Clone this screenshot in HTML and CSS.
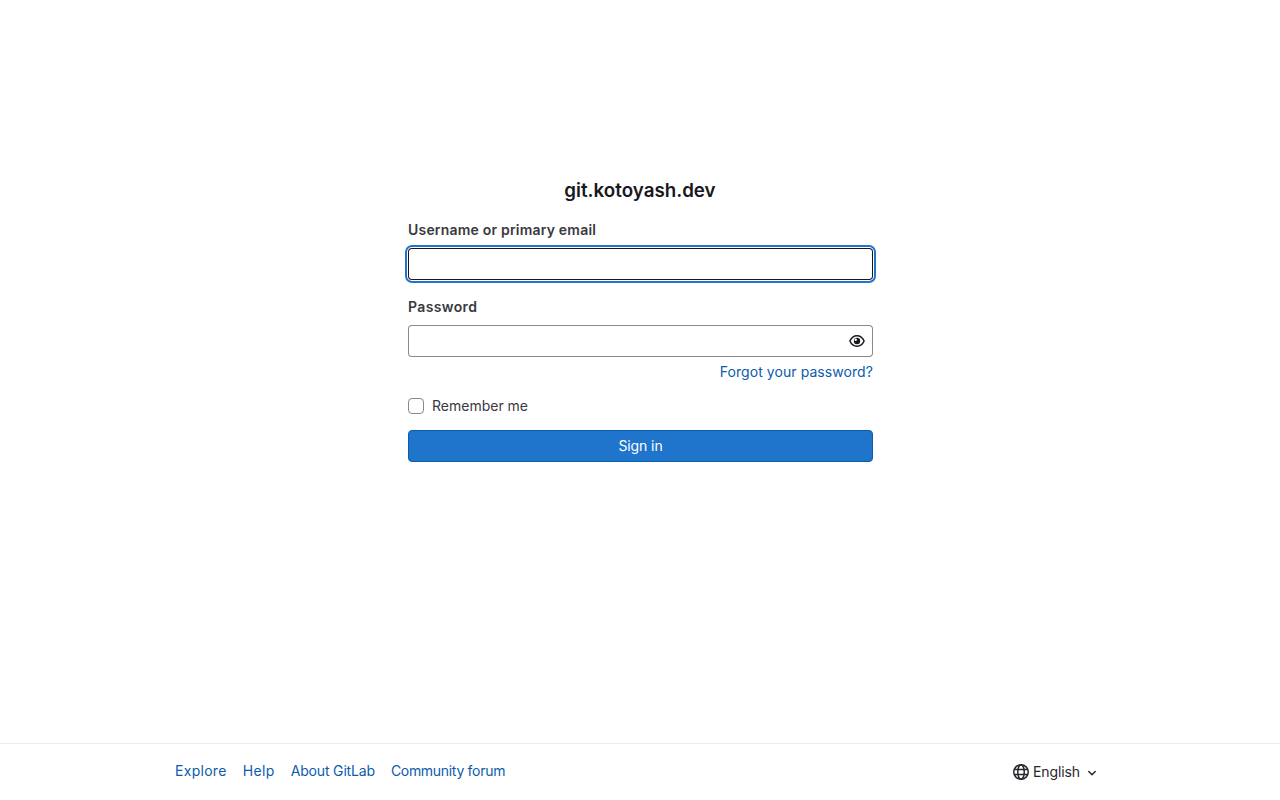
FILE: index.html
```html
<!DOCTYPE html>
<html lang="en">
<head>
<meta charset="utf-8">
<title>Sign in · GitLab</title>
<link rel="stylesheet" href="styles.css">
</head>
<body>
<div class="page">
  <main class="main">
    <h1 class="title">git.kotoyash.dev</h1>
    <form class="form">
      <div class="field">
        <label class="label" for="login">Username or primary email</label>
        <input class="input input-focus" id="login" type="text">
      </div>
      <div class="field field-password">
        <label class="label label-password" for="password">Password</label>
        <div class="password-wrap">
          <input class="input" id="password" type="password">
          <svg class="eye" width="16" height="16" viewBox="0 0 16 16" aria-hidden="true">
            <path d="M.9 8C2.400 4.600 5 2.750 8 2.750s5.600 1.850 7.100 5.250C13.600 11.400 11 13.250 8 13.250S2.400 11.400.9 8z" fill="none" stroke="#18171d" stroke-width="1.500" stroke-linejoin="round"/>
            <circle cx="8" cy="8" r="3.200" fill="#18171d"/>
            <circle cx="6.700" cy="6.800" r="1.200" fill="#fff"/>
          </svg>
        </div>
        <div class="forgot-row"><a class="link link-forgot" href="#">Forgot your password?</a></div>
      </div>
      <label class="remember">
        <span class="checkbox"></span>
        <span>Remember me</span>
      </label>
      <button class="submit" type="button">Sign in</button>
    </form>
  </main>
  <footer class="footer">
    <div class="footer-inner">
      <nav class="footer-links">
        <a class="link link-explore" href="#">Explore</a>
        <a class="link link-help" href="#">Help</a>
        <a class="link link-about" href="#">About GitLab</a>
        <a class="link link-forum" href="#">Community forum</a>
      </nav>
      <div class="lang">
        <svg class="globe" width="16" height="16" viewBox="0 0 16 16" aria-hidden="true">
          <g fill="none" stroke="#28272d" stroke-width="1.500">
            <circle cx="8" cy="8" r="7.250"/>
            <ellipse cx="8" cy="8" rx="3.250" ry="7.250"/>
            <path d="M1.200 5.500h13.600M1.200 10.500h13.600"/>
          </g>
        </svg>
        <span class="lang-name">English</span>
        <svg class="chevron" width="12" height="12" viewBox="0 0 12 12" aria-hidden="true">
          <path d="M2.800 4.500 6 7.700l3.200-3.200" fill="none" stroke="#28272d" stroke-width="1.500" stroke-linecap="round" stroke-linejoin="round"/>
        </svg>
      </div>
    </div>
  </footer>
</div>
</body>
</html>
```

FILE: styles.css
```css
* {
  box-sizing: border-box;
}

html,
body {
  margin: 0;
  padding: 0;
  background: #fff;
}

body {
  font-family: Inter, "Noto Sans", "Liberation Sans", sans-serif;
  font-size: 14px;
  line-height: 20px;
  color: #3a383f;
}

.page {
  display: flex;
  flex-direction: column;
  height: 800px;
  overflow: hidden;
}

.main {
  flex: 1;
  display: flex;
  flex-direction: column;
  align-items: center;
  padding-top: 178px;
}

.title {
  margin: 0 0 17px;
  font-size: 18.75px;
  line-height: 25px;
  font-weight: 600;
  color: #18171d;
  text-align: center;
}

.form {
  width: 465px;
  margin-left: 1px;
  display: flex;
  flex-direction: column;
}

.field {
  margin-bottom: 17px;
}

.field-password {
  margin-bottom: 14px;
}

.label {
  display: block;
  margin-bottom: 8px;
  font-weight: 600;
  color: #3a383f;
  line-height: 20px;
  letter-spacing: 0.2px;
}

.label-password {
  letter-spacing: 0.37px;
}

.input {
  display: block;
  width: 100%;
  height: 32px;
  padding: 0 12px;
  border: 0;
  border-radius: 4px;
  background: #fff;
  box-shadow: inset 0 0 0 1px #89888d;
  outline: none;
  font: inherit;
}

.input-focus {
  box-shadow: inset 0 0 0 1px #18171d, 0 0 0 1px #fff, 0 0 0 3px #1f75cb;
}

.password-wrap {
  position: relative;
}

.eye {
  position: absolute;
  right: 8px;
  top: 8px;
}

.forgot-row {
  display: flex;
  justify-content: flex-end;
  margin-top: 5px;
}

.link {
  color: #0b5cad;
  text-decoration: none;
}

.link-forgot {
  letter-spacing: 0.07px;
}

.link-explore {
  letter-spacing: 0.29px;
}

.link-help {
  letter-spacing: 0.38px;
}

.link-about {
  letter-spacing: -0.17px;
}

.link-forum {
  letter-spacing: -0.3px;
}

.remember {
  display: flex;
  align-items: center;
  gap: 8px;
  height: 20px;
  margin-bottom: 14px;
  color: #3a383f;
}

.checkbox {
  width: 16px;
  height: 16px;
  border: 1px solid #89888d;
  border-radius: 4px;
  background: #fff;
}

.submit {
  height: 32px;
  border: 1px solid #0b5cad;
  border-radius: 4px;
  background: #1f75cb;
  color: #fff;
  font: inherit;
  letter-spacing: -0.1px;
  padding: 0;
}

.footer {
  height: 57px;
  border-top: 1px solid #ececef;
  flex: none;
}

.footer-inner {
  width: 940px;
  margin-left: 175px;
  height: 100%;
  display: flex;
  justify-content: space-between;
  align-items: flex-start;
  padding-top: 17px;
}

.footer-links {
  display: flex;
  gap: 16px;
}

.lang {
  display: flex;
  align-items: center;
  gap: 4px;
  margin-top: 1px;
  margin-right: 17px;
  color: #28272d;
}

.lang-name {
  letter-spacing: -0.1px;
}

.chevron {
  margin-left: 2px;
  margin-top: 1px;
}
```
